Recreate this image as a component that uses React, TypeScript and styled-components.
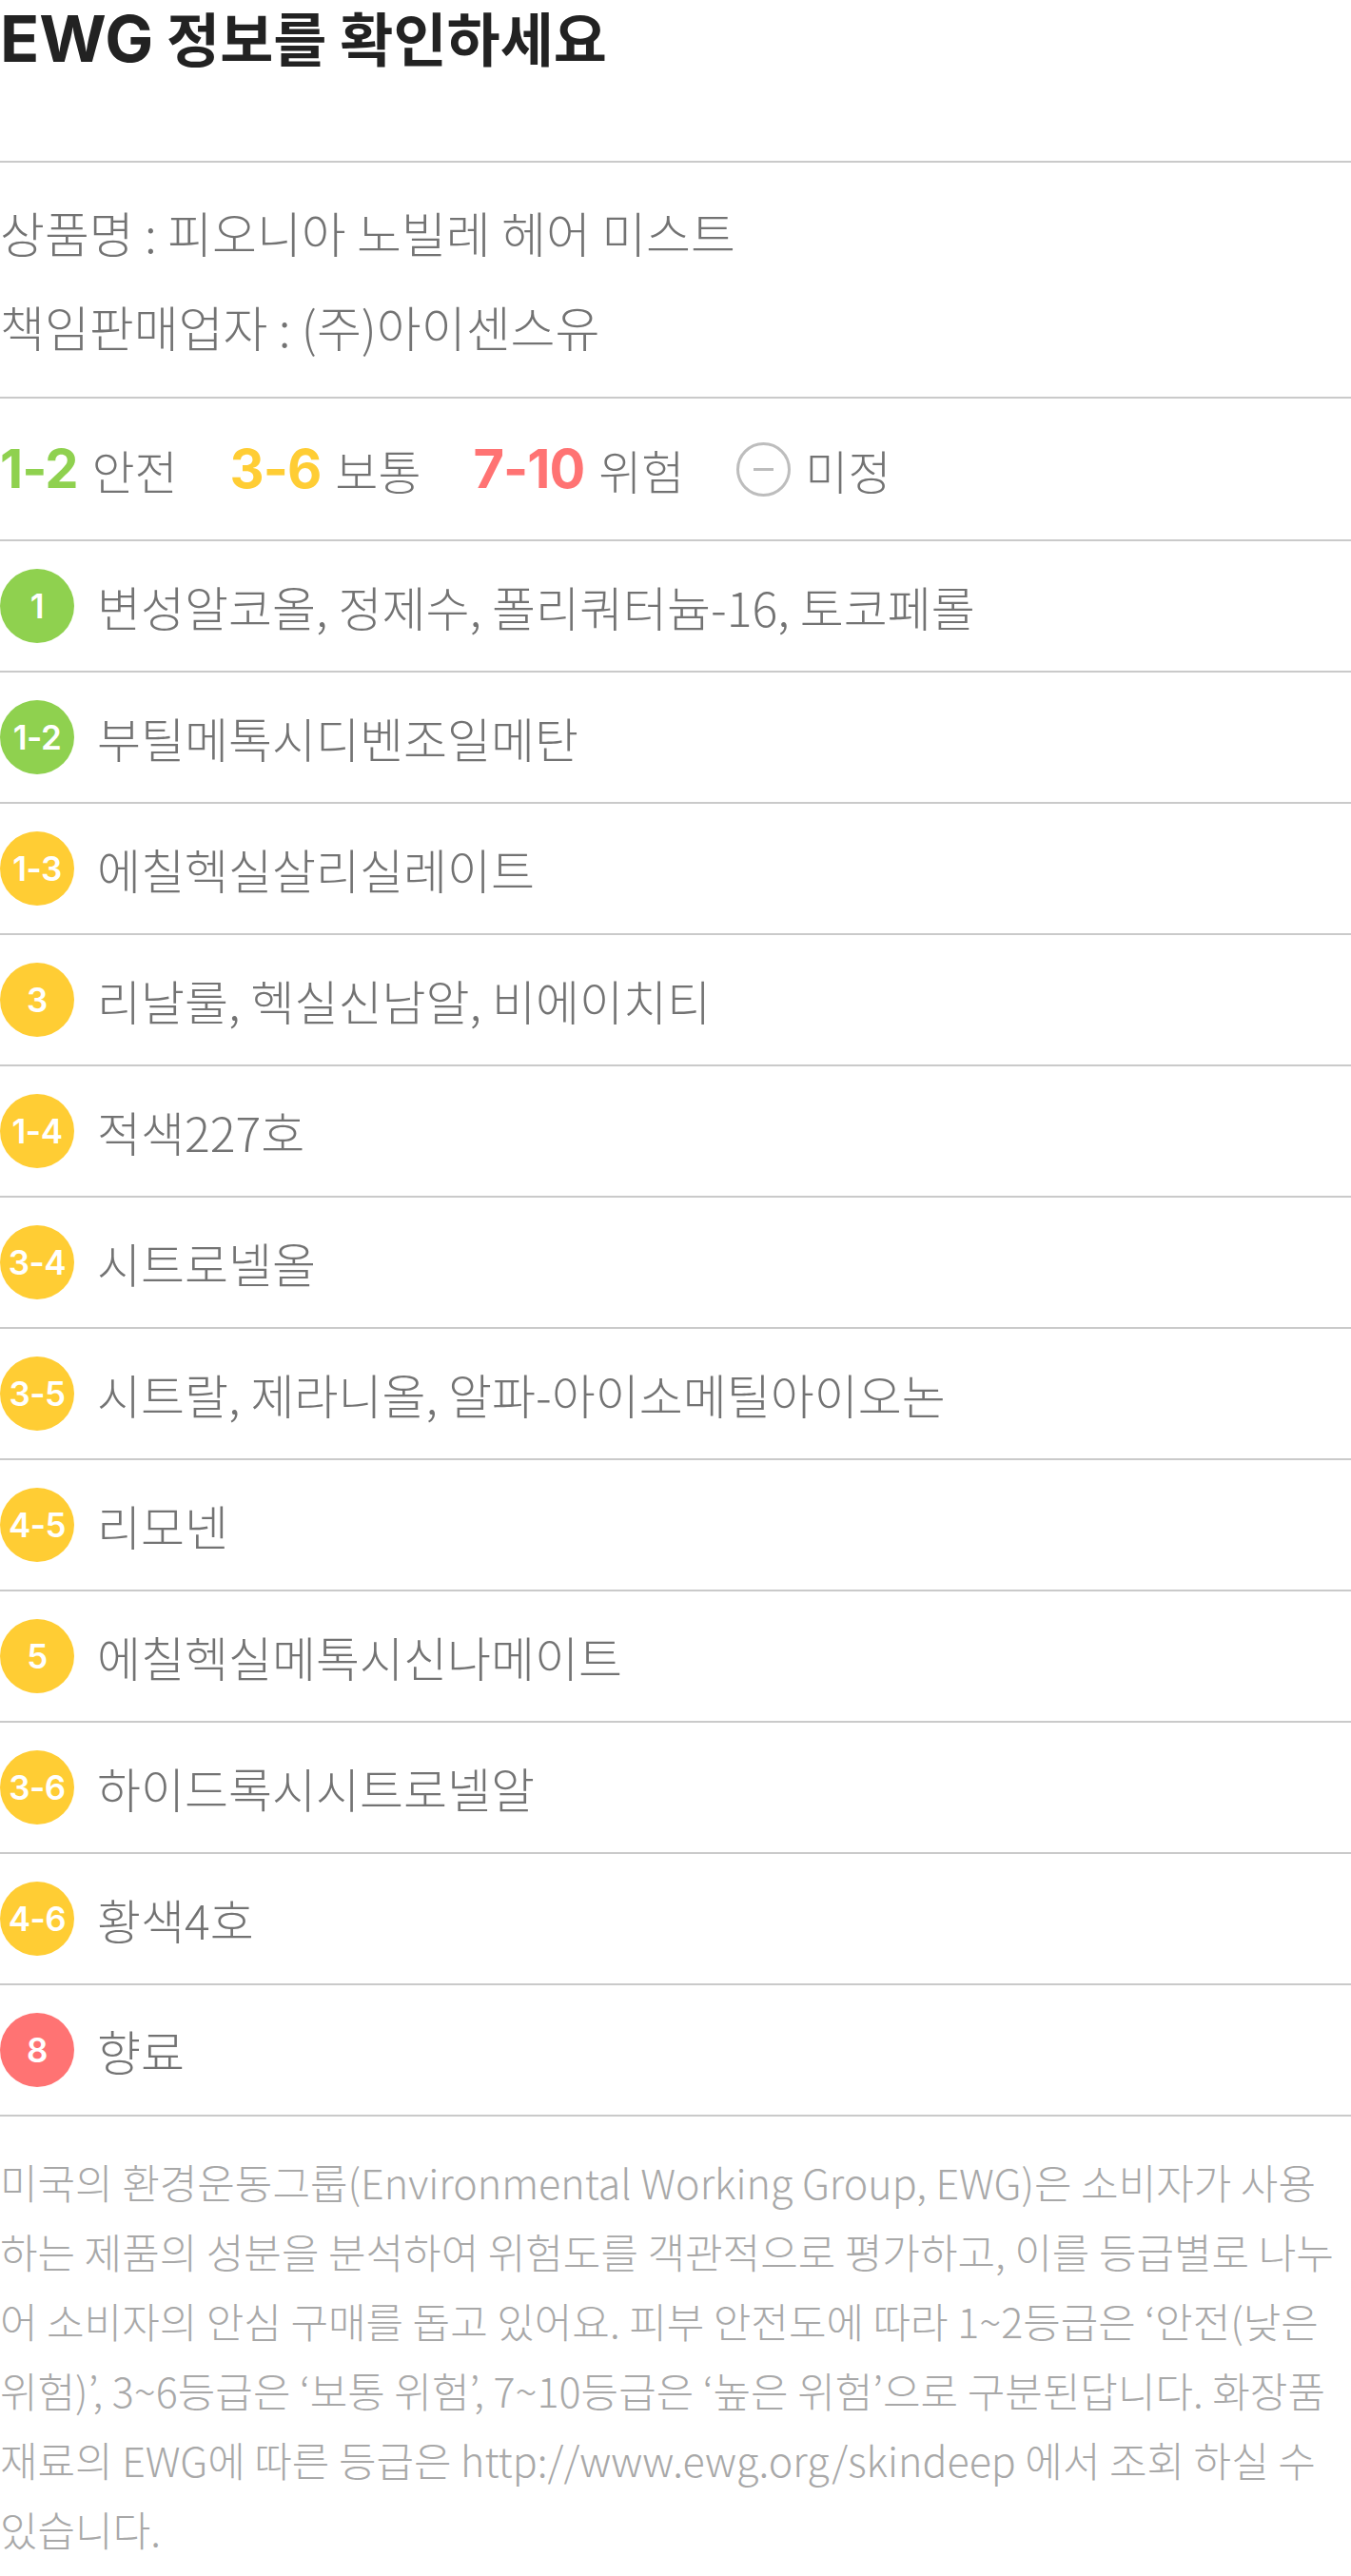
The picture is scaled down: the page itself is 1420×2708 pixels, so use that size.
import React from 'react';
import styled, { createGlobalStyle } from 'styled-components';

const GlobalStyle = createGlobalStyle`
  body {
    margin: 0;
    background: #fff;
    font-family: 'Noto Sans CJK KR', 'Noto Sans', sans-serif;
  }
`;

const colors = {
  safe: '#8fd14f',
  normal: '#ffcd34',
  danger: '#ff7373',
  line: '#cacaca',
  text: '#737373',
  muted: '#a8a8a8',
};

const Page = styled.div`
  width: 1420px;
`;

const Section = styled.div`
  border-bottom: 2px solid ${colors.line};
`;

const TitleBar = styled(Section)`
  height: 169px;
`;

const Title = styled.h1`
  margin: 0;
  font-size: 61px;
  line-height: 78px;
  font-weight: 700;
  color: #222;
`;

const Latin = styled.span`
  font-family: Inter, 'Noto Sans', sans-serif;
  font-size: 68px;
`;

const Info = styled(Section)`
  padding: 24px 0;
`;

const InfoLine = styled.div`
  font-size: 51px;
  line-height: 99px;
  font-weight: 300;
  color: ${colors.text};
`;

const Legend = styled(Section)`
  height: 148px;
  display: flex;
  align-items: center;
  gap: 55px;
`;

const LegendItem = styled.div`
  display: flex;
  align-items: center;
  gap: 15px;
`;

const Grade = styled.span<{ $color: string }>`
  font-family: Inter, 'Noto Sans', sans-serif;
  font-weight: 700;
  font-size: 56px;
  letter-spacing: -1px;
  color: ${({ $color }) => $color};
`;

const LegendLabel = styled.span`
  font-size: 49px;
  font-weight: 300;
  color: ${colors.text};
`;

const Unknown = styled.span`
  width: 51px;
  height: 51px;
  border: 3px solid #bdbdbd;
  border-radius: 50%;
  display: flex;
  align-items: center;
  justify-content: center;
  &::after {
    content: '';
    width: 21px;
    height: 3px;
    background: #bdbdbd;
  }
`;

const Row = styled(Section)`
  height: 136px;
  display: flex;
  align-items: center;
  gap: 24px;
`;

const Badge = styled.span<{ $color: string }>`
  flex: none;
  width: 78px;
  height: 78px;
  border-radius: 50%;
  background: ${({ $color }) => $color};
  display: flex;
  align-items: center;
  justify-content: center;
  font-family: Inter, 'Noto Sans', sans-serif;
  font-weight: 600;
  font-size: 35px;
  letter-spacing: -0.5px;
  color: #fff;
`;

const RowText = styled.span`
  font-size: 50px;
  font-weight: 300;
  color: ${colors.text};
`;

const Note = styled.p`
  margin: 0;
  padding: 32px 0 10px;
  font-size: 43px;
  line-height: 73px;
  font-weight: 300;
  color: ${colors.muted};
  word-break: break-all;
`;

const ingredients = [
  { grade: '1', max: 1, name: '변성알코올, 정제수, 폴리쿼터늄-16, 토코페롤' },
  { grade: '1-2', max: 2, name: '부틸메톡시디벤조일메탄' },
  { grade: '1-3', max: 3, name: '에칠헥실살리실레이트' },
  { grade: '3', max: 3, name: '리날룰, 헥실신남알, 비에이치티' },
  { grade: '1-4', max: 4, name: '적색227호' },
  { grade: '3-4', max: 4, name: '시트로넬올' },
  { grade: '3-5', max: 5, name: '시트랄, 제라니올, 알파-아이소메틸아이오논' },
  { grade: '4-5', max: 5, name: '리모넨' },
  { grade: '5', max: 5, name: '에칠헥실메톡시신나메이트' },
  { grade: '3-6', max: 6, name: '하이드록시시트로넬알' },
  { grade: '4-6', max: 6, name: '황색4호' },
  { grade: '8', max: 8, name: '향료' },
];

const gradeColor = (max: number) => {
  if (max <= 2) return colors.safe;
  if (max <= 6) return colors.normal;
  return colors.danger;
};

const App: React.FC = () => (
  <Page>
    <GlobalStyle />
    <TitleBar>
      <Title>
        <Latin>EWG</Latin> 정보를 확인하세요
      </Title>
    </TitleBar>
    <Info>
      <InfoLine>상품명 : 피오니아 노빌레 헤어 미스트</InfoLine>
      <InfoLine>책임판매업자 : (주)아이센스유</InfoLine>
    </Info>
    <Legend>
      <LegendItem>
        <Grade $color={colors.safe}>1-2</Grade>
        <LegendLabel>안전</LegendLabel>
      </LegendItem>
      <LegendItem>
        <Grade $color={colors.normal}>3-6</Grade>
        <LegendLabel>보통</LegendLabel>
      </LegendItem>
      <LegendItem>
        <Grade $color={colors.danger}>7-10</Grade>
        <LegendLabel>위험</LegendLabel>
      </LegendItem>
      <LegendItem>
        <Unknown />
        <LegendLabel>미정</LegendLabel>
      </LegendItem>
    </Legend>
    {ingredients.map(({ grade, max, name }) => (
      <Row key={name}>
        <Badge $color={gradeColor(max)}>{grade}</Badge>
        <RowText>{name}</RowText>
      </Row>
    ))}
    <Note>
      미국의 환경운동그룹(Environmental Working Group, EWG)은 소비자가 사용하는 제품의 성분을 분석하여 위험도를
      객관적으로 평가하고, 이를 등급별로 나누어 소비자의 안심 구매를 돕고 있어요. 피부 안전도에 따라 1~2등급은
      ‘안전(낮은 위험)’, 3~6등급은 ‘보통 위험’, 7~10등급은 ‘높은 위험’으로 구분된답니다. 화장품 재료의 EWG에 따른
      등급은 http://www.ewg.org/skindeep 에서 조회 하실 수 있습니다.
    </Note>
  </Page>
);

export default App;
